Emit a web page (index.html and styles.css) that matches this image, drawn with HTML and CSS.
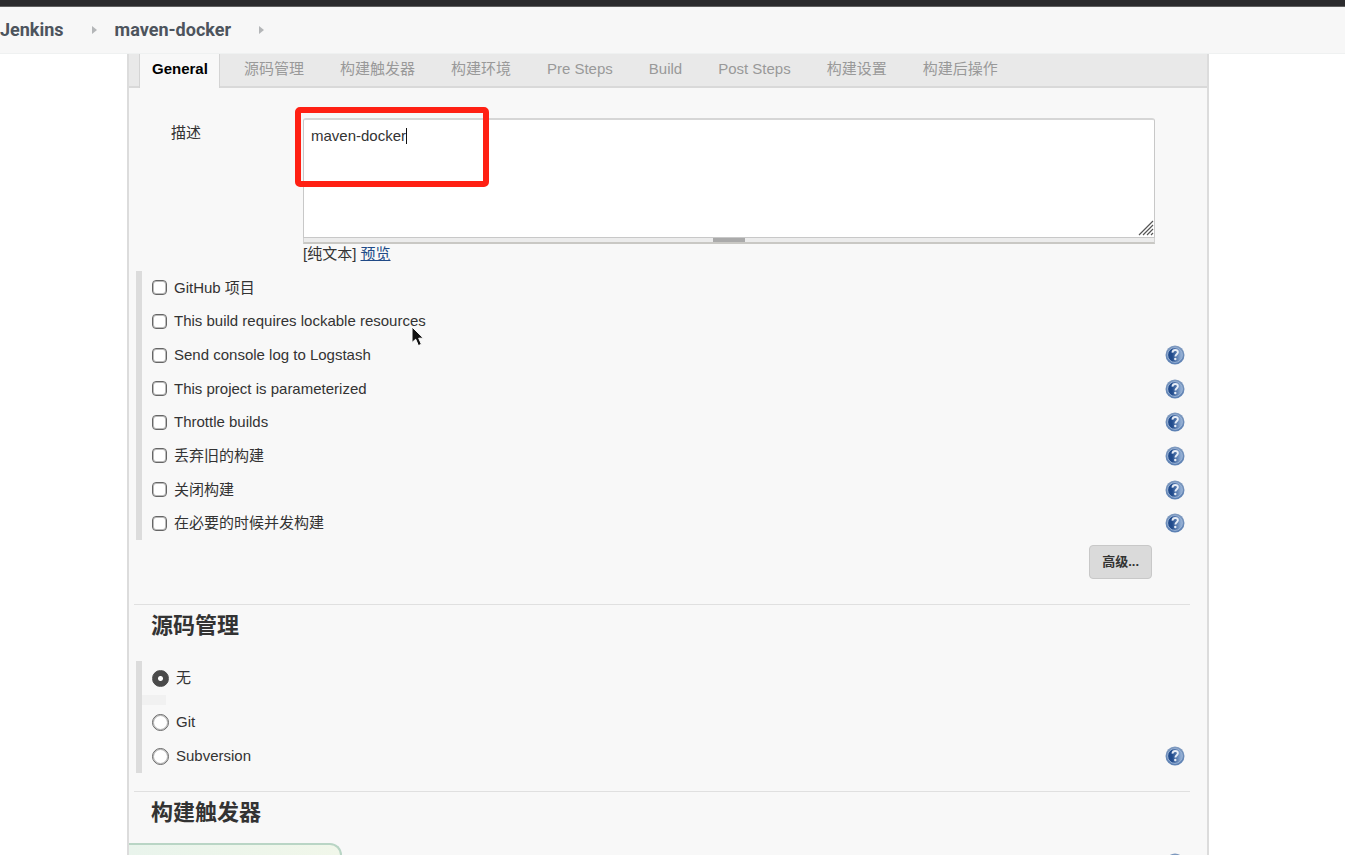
FILE: index.html
```html
<!DOCTYPE html>
<html lang="zh-CN">

<head>
    <meta charset="UTF-8">
    <meta name="viewport" content="width=device-width, initial-scale=1.0">
    <title>maven-docker Config [Jenkins]</title>
    <link rel="stylesheet" href="styles.css">
</head>

<body>
    <svg class="sprite" aria-hidden="true">
        <defs>
            <linearGradient id="ring" x1="0" y1="0" x2="0" y2="1">
                <stop offset="0" stop-color="#7f9abf" />
                <stop offset="1" stop-color="#5a7fb3" />
            </linearGradient>
            <linearGradient id="disc" x1="0" y1="0" x2="1" y2="0">
                <stop offset="0.3" stop-color="#214b8c" />
                <stop offset="0.9" stop-color="#8eabd2" />
            </linearGradient>
        </defs>
        <symbol id="help" viewBox="0 0 20 20">
            <circle cx="10" cy="10" r="9.5" fill="url(#ring)" />
            <circle cx="10" cy="10" r="7.4" fill="url(#disc)" stroke="#9bb4d6" stroke-width="1" />
            <path d="M7.4 7.6C7.6 5.9 8.7 5 10.2 5C12 5 12.9 6 12.9 7.3C12.9 9.2 10.4 9.3 10.4 11.6" fill="none" stroke="#e8eef7" stroke-width="1.9" />
            <circle cx="10.3" cy="14" r="1.2" fill="#e8eef7" />
        </symbol>
    </svg>

    <div class="topbar"></div>
    <nav class="breadcrumb">
        <a href="#">Jenkins</a>
        <span class="arrow"></span>
        <a href="#">maven-docker</a>
        <span class="arrow"></span>
    </nav>

    <main class="panel">
        <div class="tabs">
            <a class="tab active" href="#">General</a>
            <a class="tab" href="#">源码管理</a>
            <a class="tab" href="#">构建触发器</a>
            <a class="tab" href="#">构建环境</a>
            <a class="tab" href="#">Pre Steps</a>
            <a class="tab" href="#">Build</a>
            <a class="tab" href="#">Post Steps</a>
            <a class="tab" href="#">构建设置</a>
            <a class="tab" href="#">构建后操作</a>
        </div>

        <form class="config">
            <div class="description">
                <label for="desc">描述</label>
                <div class="field">
                    <textarea id="desc">maven-docker</textarea>
                    <svg class="grip" viewBox="0 0 16 16" aria-hidden="true">
                        <path d="M1 15L15 1M5 15L15 5M9 15L15 9M13 15L15 13" stroke="#555" stroke-width="1.2" />
                    </svg>
                    <span class="caret"></span>
                    <div class="highlight"></div>
                    <div class="handle"></div>
                    <p class="format">[纯文本] <a href="#">预览</a></p>
                </div>
            </div>

            <div class="group options">
                <div class="row">
                    <label><input type="checkbox">GitHub 项目</label>
                </div>
                <div class="row">
                    <label><input type="checkbox">This build requires lockable resources</label>
                    <svg class="pointer" viewBox="0 0 14 22" aria-hidden="true">
                        <path d="M1 1V16.5L4.7 13.2L7.4 19.6L10.4 18.3L7.7 12.2H12.4Z" fill="#111" stroke="#fff" stroke-width="1" />
                    </svg>
                </div>
                <div class="row">
                    <label><input type="checkbox">Send console log to Logstash</label>
                    <a class="help" href="#" aria-label="Help"><svg><use href="#help" /></svg></a>
                </div>
                <div class="row">
                    <label><input type="checkbox">This project is parameterized</label>
                    <a class="help" href="#" aria-label="Help"><svg><use href="#help" /></svg></a>
                </div>
                <div class="row">
                    <label><input type="checkbox">Throttle builds</label>
                    <a class="help" href="#" aria-label="Help"><svg><use href="#help" /></svg></a>
                </div>
                <div class="row">
                    <label><input type="checkbox">丢弃旧的构建</label>
                    <a class="help" href="#" aria-label="Help"><svg><use href="#help" /></svg></a>
                </div>
                <div class="row">
                    <label><input type="checkbox">关闭构建</label>
                    <a class="help" href="#" aria-label="Help"><svg><use href="#help" /></svg></a>
                </div>
                <div class="row">
                    <label><input type="checkbox">在必要的时候并发构建</label>
                    <a class="help" href="#" aria-label="Help"><svg><use href="#help" /></svg></a>
                </div>
            </div>

            <div class="actions">
                <button type="button">高级...</button>
            </div>

            <section>
                <h2>源码管理</h2>
                <div class="group">
                    <div class="row">
                        <label><input type="radio" name="scm" checked>无</label>
                    </div>
                    <div class="nested"></div>
                    <div class="row">
                        <label><input type="radio" name="scm">Git</label>
                    </div>
                    <div class="row">
                        <label><input type="radio" name="scm">Subversion</label>
                        <a class="help" href="#" aria-label="Help"><svg><use href="#help" /></svg></a>
                    </div>
                </div>
            </section>

            <section>
                <h2>构建触发器</h2>
                <div class="group triggers">
                    <div class="row">
                        <a class="help" href="#" aria-label="Help"><svg><use href="#help" /></svg></a>
                    </div>
                </div>
            </section>
        </form>

        <div class="savebar"></div>
    </main>
</body>

</html>
```
FILE: styles.css
```css
* {
    box-sizing: border-box;
}

body {
    display: flex;
    flex-direction: column;
    margin: 0;
    height: 100vh;
    overflow: hidden;
    background-color: #fff;
    color: #333;
    font-family: "Liberation Sans", "Noto Sans CJK SC", sans-serif;
    font-size: 15px;
    line-height: 20px;
}

.sprite {
    position: absolute;
    width: 0;
    height: 0;
}

.topbar {
    flex: none;
    height: 7px;
    background-color: #2b2b2d;
    border-bottom: 1px solid #606060;
}

.breadcrumb {
    display: flex;
    flex: none;
    align-items: center;
    height: 47px;
    background-color: #f7f7f7;
    border-bottom: 1px solid #eff1f1;
    font-family: Roboto, sans-serif;
    font-size: 18px;
    font-weight: 700;
}

.breadcrumb a {
    color: #4d545d;
    text-decoration: none;
}

.arrow {
    margin: 0 18px 0 28px;
    border: 4px solid transparent;
    border-left: 5px solid #b4b6b8;
    border-right: 0;
}

.panel {
    position: relative;
    flex: 1;
    min-height: 0;
    overflow: hidden;
    margin: 0 136px 0 127px;
    background-color: #f8f8f8;
    border: 2px solid #dcdcdc;
    border-top: 0;
    border-bottom: 0;
}

.tabs {
    display: flex;
    gap: 12px;
    height: 34px;
    padding-left: 10px;
    background-color: #e9e9e9;
    box-shadow: inset 0 -2px #d9d9d9;
}

.tab {
    padding: 5px 12px 0;
    color: #999;
    text-decoration: none;
    white-space: nowrap;
}

.tab.active {
    padding: 5px 11px 0 12px;
    color: #000;
    font-weight: 700;
    background-color: #f8f8f8;
    border: 1px solid #d4d4d4;
    border-top: 0;
    border-bottom: 0;
}

.config {
    padding: 30px 17px 0 5px;
}

.description {
    display: flex;
    padding: 0 35px 0 37px;
}

.description label {
    flex: none;
    width: 132px;
    padding-top: 5px;
}

.field {
    position: relative;
    flex: 1;
}

textarea {
    display: block;
    width: 100%;
    height: 120px;
    padding: 6px 7px;
    color: #333;
    font: inherit;
    resize: none;
    outline: none;
    background-color: #fff;
    border: 1px solid #c8c8c8;
    border-top: 2px solid #d6d6d6;
    border-radius: 3px 3px 0 0;
}

.grip {
    position: absolute;
    top: 102px;
    right: 1px;
    width: 16px;
    height: 16px;
}

.caret {
    position: absolute;
    top: 10px;
    left: 103px;
    width: 1px;
    height: 16px;
    background-color: #111;
}

.highlight {
    position: absolute;
    top: -11px;
    left: -8px;
    width: 194px;
    height: 80px;
    border: 6px solid #ff2013;
    border-radius: 5px;
}

.handle {
    height: 6px;
    border: 1px solid #d2d2d2;
    border-top: 0;
    border-bottom: 2px solid #c9c8c4;
    background: linear-gradient(#aaa, #aaa) center / 32px 100% no-repeat #ececec;
}

.format {
    margin: 0 0 7px;
}

.format a {
    color: #204a87;
}

.group {
    position: relative;
    display: flex;
    flex-direction: column;
    margin-left: 2px;
    border-left: 6px solid #dcdcdc;
}

.options {
    min-height: 269px;
}

.row {
    position: relative;
    display: flex;
    flex: 1 0 auto;
    align-items: center;
    justify-content: space-between;
    min-height: 34px;
    padding: 0 5px 0 10px;
}

.options .row {
    min-height: 0;
}

.triggers .row {
    min-height: 30px;
}

.row label {
    display: flex;
    align-items: center;
    gap: 7px;
}

input {
    appearance: none;
    flex: none;
    margin: 0;
    background-color: #fff;
    border: 1px solid #666;
    box-shadow: inset 0 0 0 1px #bbb;
}

input[type="checkbox"] {
    width: 15px;
    height: 15px;
    border-radius: 4px;
}

input[type="radio"] {
    width: 17px;
    height: 17px;
    border-radius: 50%;
}

input[type="radio"]:checked {
    background: radial-gradient(circle, #fff 2px, #4a4a4a 3px);
    border-color: #4a4a4a;
    box-shadow: none;
}

.help {
    display: block;
    height: 20px;
    margin-left: auto;
}

.help svg {
    display: block;
    width: 20px;
    height: 20px;
}

.pointer {
    position: absolute;
    top: 21px;
    left: 269px;
    width: 14px;
    height: 22px;
}

.actions {
    display: flex;
    justify-content: flex-end;
    padding: 5px 38px 25px 0;
}

button {
    height: 34px;
    padding: 0 12px;
    color: #333;
    font: inherit;
    font-size: 13px;
    font-weight: 700;
    background-color: #dadada;
    border: 1px solid #c8c8c8;
    border-radius: 4px;
}

section {
    border-top: 1px solid #e0e0e0;
    padding-bottom: 18px;
}

h2 {
    margin: 0;
    padding: 6px 0 20px 17px;
    font-size: 22px;
    line-height: 30px;
}

.nested {
    width: 24px;
    height: 10px;
    background-color: #f1f1f1;
}

.savebar {
    position: absolute;
    bottom: 0;
    left: -1px;
    width: 214px;
    height: 12px;
    background: linear-gradient(to right, #e9f4ec, #f1f7ea);
    border: 2px solid #b9d5c5;
    border-bottom: 0;
    border-left-width: 1px;
    border-radius: 0 12px 0 0;
}
```
